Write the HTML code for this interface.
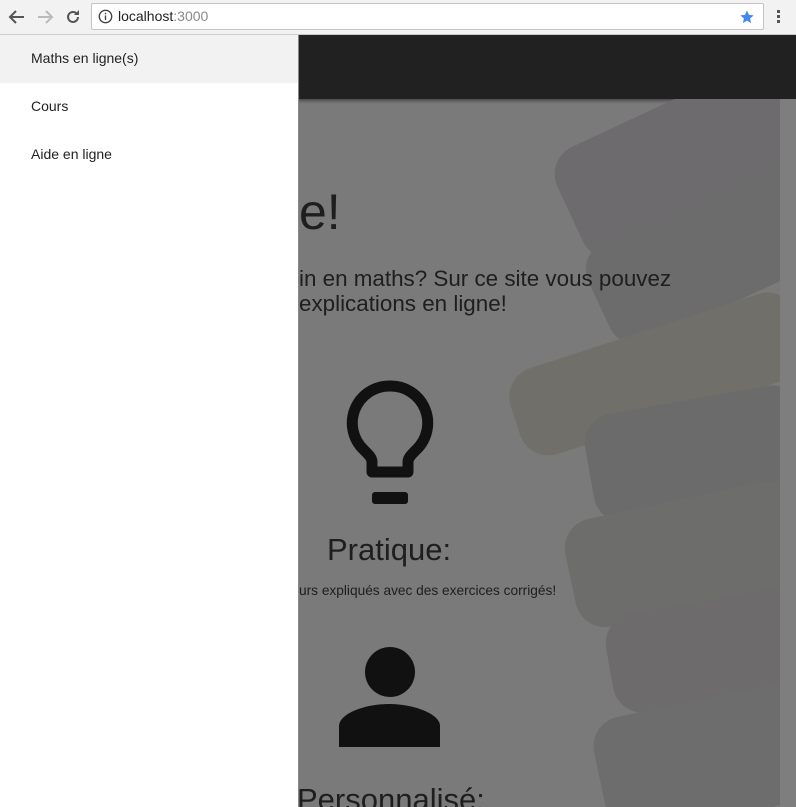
<!DOCTYPE html>
<html><head><meta charset="utf-8"><style>
*{margin:0;padding:0;box-sizing:border-box}
html,body{width:796px;height:807px;overflow:hidden}
body{font-family:"Liberation Sans",sans-serif;background:#7a7a7a;position:relative}
.chrome{position:absolute;left:0;top:0;width:796px;height:35px;background:#f2f2f2;border-bottom:1px solid #cfcfcf}
.url{position:absolute;left:91px;top:3px;width:673px;height:27px;background:#fff;border:1px solid #c4c4c4;border-radius:2px;font-size:14px;line-height:25px;padding-left:26px;color:#222}
.url span{color:#888}
.bar{position:absolute;left:298px;top:35px;width:498px;height:64px;background:#212121;box-shadow:0 2px 3px rgba(0,0,0,.4)}
.drawer{position:absolute;left:0;top:35px;width:299px;height:772px;background:#fff;z-index:5;border-right:1px solid #888}
.drawer div{height:48px;line-height:46px;padding-left:31px;font-size:14px;color:#222}
.t{position:absolute;color:#1e1e1e;white-space:nowrap}
.books{position:absolute;left:298px;top:99px;width:482px;height:708px;overflow:hidden}
.books div{position:absolute;border-radius:30px}
.scroll{position:absolute;left:780px;top:99px;width:16px;height:708px;background:#7e7e7e}
</style></head><body>
<div class="chrome">
<svg style="position:absolute;left:8px;top:9px" width="18" height="16" viewBox="0 0 18 16"><path d="M16 8H3M8 2L2 8l6 6" stroke="#555" stroke-width="2" fill="none"/></svg>
<svg style="position:absolute;left:36px;top:9px" width="18" height="16" viewBox="0 0 18 16"><path d="M2 8h13M10 2l6 6-6 6" stroke="#bbb" stroke-width="2" fill="none"/></svg>
<svg style="position:absolute;left:64px;top:8px" width="18" height="18" viewBox="0 0 18 18"><path d="M14 9a5 5 0 1 1-1.5-3.6" stroke="#555" stroke-width="2" fill="none"/><path d="M15 2v5h-5z" fill="#555"/></svg>
<div class="url"><svg style="position:absolute;left:6px;top:5px" width="15" height="15" viewBox="0 0 15 15"><circle cx="7.5" cy="7.5" r="6.2" stroke="#444" stroke-width="1.4" fill="none"/><rect x="6.8" y="6.5" width="1.4" height="4.5" fill="#444"/><rect x="6.8" y="3.8" width="1.4" height="1.5" fill="#444"/></svg>localhost<span>:3000</span>
<svg style="position:absolute;right:8px;top:5px" width="16" height="16" viewBox="0 0 24 24"><path d="M12 2l2.9 6.9 7.1.6-5.4 4.7 1.6 7-6.2-3.8-6.2 3.8 1.6-7L2 9.5l7.1-.6z" fill="#4285f4"/></svg></div>
<div style="position:absolute;left:777px;top:10px;width:3px;height:3px;background:#555;box-shadow:0 5px #555,0 10px #555"></div>
</div>
<div class="bar"></div>
<div class="books">
<div style="left:260px;top:0;width:260px;height:120px;background:#6e6b6e;transform:rotate(-25deg)"></div>
<div style="left:290px;top:100px;width:240px;height:110px;background:#6d6c6d;transform:rotate(-25deg)"></div>
<div style="left:210px;top:230px;width:300px;height:90px;background:#716f6a;transform:rotate(-18deg)"></div>
<div style="left:290px;top:300px;width:220px;height:110px;background:#6c6b6b;transform:rotate(-10deg)"></div>
<div style="left:270px;top:400px;width:240px;height:110px;background:#6d6e6c;transform:rotate(-12deg)"></div>
<div style="left:310px;top:500px;width:220px;height:100px;background:#6d6b6b;transform:rotate(-10deg)"></div>
<div style="left:300px;top:600px;width:220px;height:120px;background:#6c6d6c;transform:rotate(-12deg)"></div>
</div>
<div class="scroll"></div>
<div class="t" style="left:299px;top:183px;font-size:50px">e!</div>
<div class="t" style="left:299px;top:266px;font-size:22.4px;line-height:25px">in en maths? Sur ce site vous pouvez<br>explications en ligne!</div>
<svg style="position:absolute;left:346px;top:380px" width="88" height="126" viewBox="0 0 88 126"><path d="M44 6a37 37 0 0 0-26 64c5 5 8 8 8 12v10h36V82c0-4 3-7 8-12A37 37 0 0 0 44 6z" fill="none" stroke="#111" stroke-width="11" stroke-linejoin="round"/><rect x="26" y="112" width="36" height="12" rx="3" fill="#111"/></svg>
<div class="t" style="left:327px;top:532px;font-size:31px">Pratique:</div>
<div class="t" style="left:299px;top:583px;font-size:13.7px">urs expliqués avec des exercices corrigés!</div>
<svg style="position:absolute;left:339px;top:646px" width="101" height="101" viewBox="0 0 101 101"><circle cx="51" cy="26" r="25" fill="#111"/><path d="M0 101V80c0-12 25-22 50-22s51 10 51 22v21z" fill="#111"/></svg>
<div class="t" style="left:297px;top:782px;font-size:31px">Personnalisé:</div>
<div class="drawer"><div style="background:#f2f2f2">Maths en ligne(s)</div><div>Cours</div><div>Aide en ligne</div></div>
</body></html>
